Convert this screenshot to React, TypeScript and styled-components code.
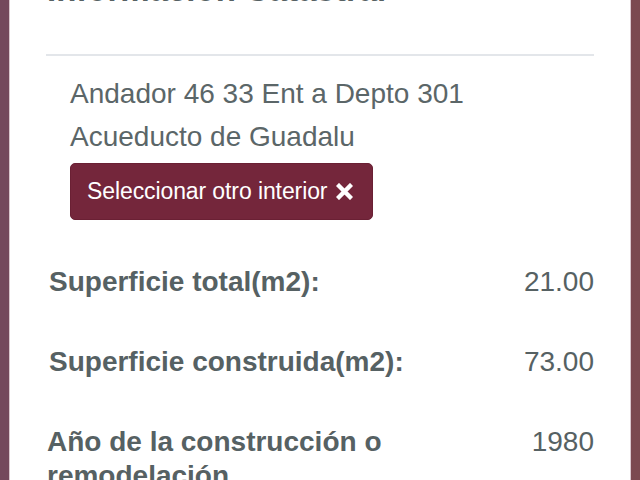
import styled, { createGlobalStyle } from "styled-components";

const GlobalStyle = createGlobalStyle`
    html, body {
        margin: 0;
        padding: 0;
        height: 100%;
        overflow: hidden;
    }
    body {
        background: linear-gradient(90deg, #74485c 0%, #764656 50%, #7b4950 100%);
        font-family: "Liberation Sans", Arial, sans-serif;
    }
`;

const Panel = styled.div`
    box-sizing: border-box;
    margin: 0 9px 0 9px;
    min-height: 480px;
    background: #ffffff;
    border-left: 1px solid #d9c6cd;
    border-right: 1px solid #d9c6cd;
    padding: 0 36px;
    color: #566163;
    overflow: hidden;
`;

const Heading = styled.h3`
    font-size: 33px;
    font-weight: 700;
    line-height: 40px;
    margin: -30px 0 0 1px;
    color: #566163;
`;

const Divider = styled.hr`
    border: none;
    height: 2px;
    background: #e3e6ea;
    margin: 44px 0 0;
`;

const Address = styled.div`
    padding: 16px 0 0 24px;
`;

const AddressLine = styled.p`
    margin: 0;
    font-size: 28px;
    line-height: 43px;
    color: #5b6668;
`;

const Button = styled.button`
    display: inline-flex;
    align-items: center;
    gap: 9px;
    margin-top: 5px;
    padding: 12px 19px 12px 16px;
    font-family: "Liberation Sans", Arial, sans-serif;
    font-size: 23px;
    line-height: 31px;
    letter-spacing: -0.1px;
    color: #ffffff;
    background: #74263b;
    border: 1px solid #6a2034;
    border-radius: 5px;
    cursor: pointer;
`;

// heavy "times" glyph used on the button
const CloseIcon = () => (
    <svg width="17" height="17" viewBox="0 0 17 17" aria-hidden="true">
        <path d="M3 3 L14 14 M14 3 L3 14" stroke="#ffffff" strokeWidth="4.4" strokeLinecap="square" />
    </svg>
);

const Details = styled.div`
    display: flex;
    flex-direction: column;
    gap: 46px;
    padding-top: 45px;
`;

const Row = styled.div`
    display: flex;
    justify-content: space-between;
    align-items: flex-start;
    font-size: 28px;
    line-height: 34px;
`;

const Label = styled.span<{ $indent?: number }>`
    width: 370px;
    font-weight: 700;
    color: #566163;
    padding-left: ${(p) => p.$indent ?? 3}px;
`;

const Value = styled.span`
    color: #566163;
    text-align: right;
`;

const rows = [
    { label: "Superficie total(m2):", value: "21.00", indent: 3 },
    { label: "Superficie construida(m2):", value: "73.00", indent: 3 },
    { label: "Año de la construcción o remodelación", value: "1980", indent: 1 },
];

export default function App() {
    return (
        <>
            <GlobalStyle />
            <Panel>
                <Heading>Información Catastral</Heading>
                <Divider />
                <Address>
                    <AddressLine>Andador 46 33 Ent a Depto 301</AddressLine>
                    <AddressLine>Acueducto de Guadalu</AddressLine>
                    <Button>
                        Seleccionar otro interior
                        <CloseIcon />
                    </Button>
                </Address>
                <Details>
                    {rows.map((r) => (
                        <Row key={r.label}>
                            <Label $indent={r.indent}>{r.label}</Label>
                            <Value>{r.value}</Value>
                        </Row>
                    ))}
                </Details>
            </Panel>
        </>
    );
}
